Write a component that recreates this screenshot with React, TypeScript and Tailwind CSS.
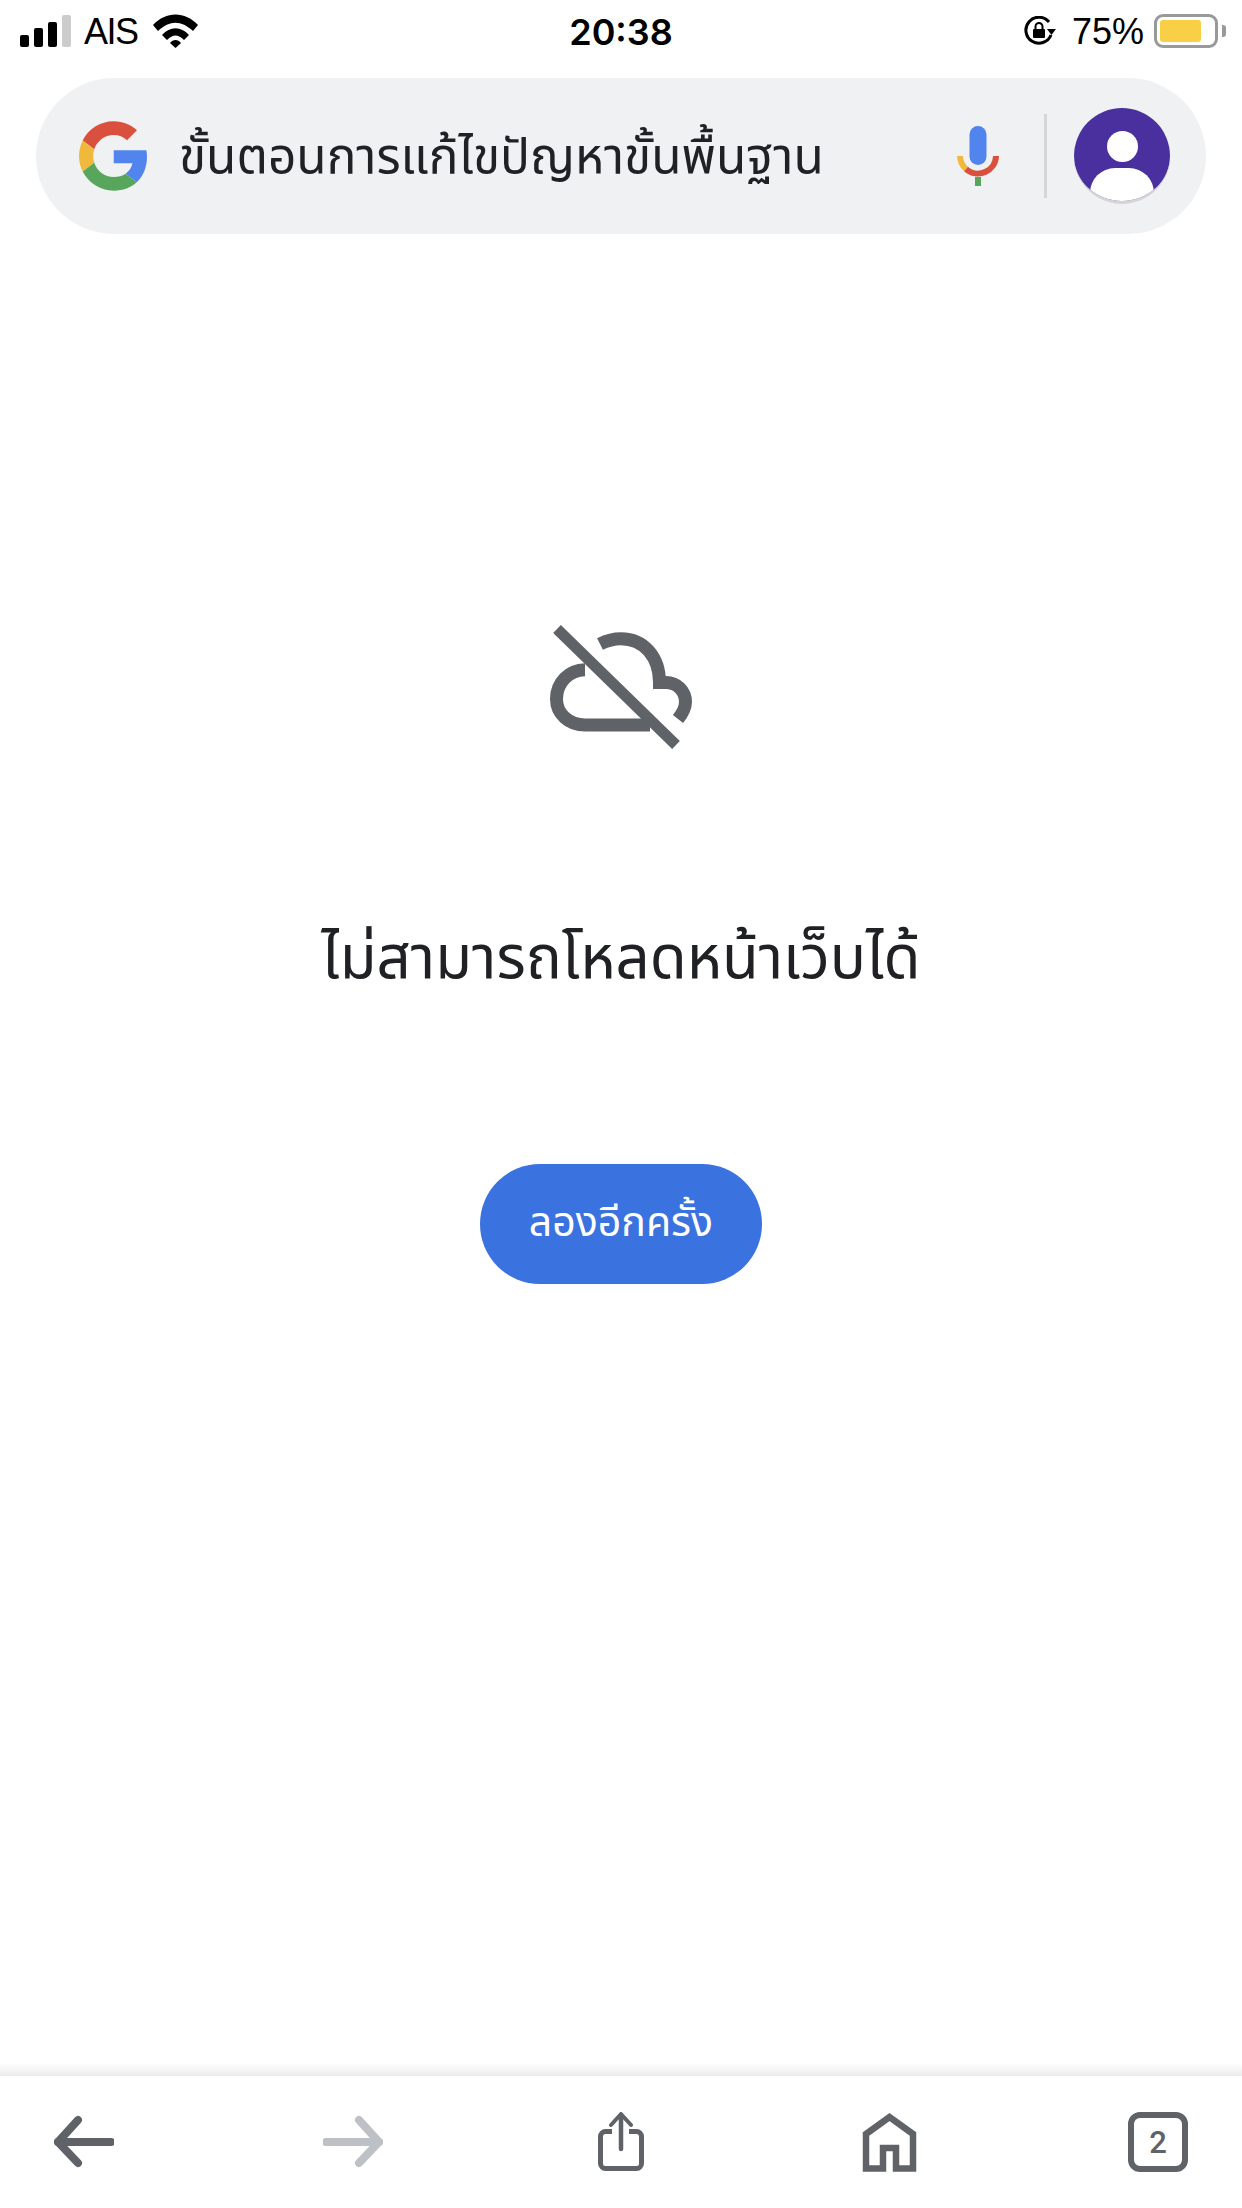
export default function App() {
  const thai = "font-['Noto_Sans_Thai','Noto_Sans','Liberation_Sans',sans-serif]";
  return (
    <div className="flex h-[2208px] w-[1242px] flex-col overflow-hidden bg-white font-['Liberation_Sans',sans-serif]">
      {/* status bar */}
      <div className="relative flex h-[62px] items-center justify-between pl-[20px] pr-[16px] text-black">
        <div className="flex items-center">
          <div className="flex h-[32px] items-end gap-[5px]">
            <div className="h-[12px] w-[9px] rounded-[2px] bg-black" />
            <div className="h-[19px] w-[9px] rounded-[2px] bg-black" />
            <div className="h-[25px] w-[9px] rounded-[2px] bg-black" />
            <div className="h-[32px] w-[9px] rounded-[2px] bg-[#cccccc]" />
          </div>
          <span className="ml-[13px] mt-[2px] text-[36px] leading-none tracking-[-1.5px]">AIS</span>
          <svg className="ml-[15px]" width="45" height="34" viewBox="0 0 45 34">
            <path d="M0 11 C13 -3 32 -3 45 11 L40 17 C28 6 17 6 5 17 Z" fill="#000" />
            <path d="M9 21 C17 12 28 12 36 21 L31 26 C25 20 20 20 14 26 Z" fill="#000" />
            <path d="M17 29 C20 25 25 25 28 29 L22.5 34 Z" fill="#000" />
          </svg>
        </div>
        <span className="absolute left-1/2 top-[12px] -translate-x-1/2 font-['Inter',sans-serif] text-[36px] font-semibold leading-[40px]">20:38</span>
        <div className="flex items-center">
          <svg width="32" height="30" viewBox="0 0 32 30">
            <path d="M27 19 A13 13 0 1 1 25 6" fill="none" stroke="#000" strokeWidth="3" />
            <path d="M23 13 L32 13 L27.5 19 Z" fill="#000" />
            <rect x="9" y="13" width="12" height="9" rx="1" fill="#000" />
            <path d="M11.5 13 V10.5 a3.5 3.5 0 0 1 7 0 V13" fill="none" stroke="#000" strokeWidth="2" />
          </svg>
          <span className="ml-[16px] mt-[2px] text-[36px] leading-none">75%</span>
          <div className="ml-[10px] flex h-[34px] w-[64px] items-center rounded-[9px] border-[3px] border-[#999999] pl-[3px]">
            <div className="h-[22px] w-[41px] rounded-[3px] bg-[#f8cf45]" />
          </div>
          <div className="ml-[4px] h-[12px] w-[4px] rounded-r-[3px] bg-[#999999]" />
        </div>
      </div>

      {/* search pill */}
      <div className="mx-[36px] mt-[16px] flex h-[156px] items-center rounded-full bg-[#f0f1f3] pl-[43px] pr-[36px]">
        <svg width="68" height="70" viewBox="0 0 47 48" className="shrink-0">
          <path fill="#d9503f" d="M24 9.5c3.54 0 6.71 1.22 9.21 3.6l6.85-6.85C35.9 2.38 30.47 0 24 0 14.62 0 6.51 5.38 2.56 13.22l7.98 6.19C12.43 13.72 17.74 9.5 24 9.5z" />
          <path fill="#5284ee" d="M46.98 24.55c0-1.57-.15-3.09-.38-4.55H24v9.02h12.94c-.58 2.96-2.26 5.48-4.78 7.18l7.73 6c4.51-4.18 7.09-10.36 7.09-17.65z" />
          <path fill="#f1b93b" d="M10.53 28.59c-.48-1.45-.76-2.99-.76-4.59s.27-3.14.76-4.59l-7.98-6.19C.92 16.46 0 20.12 0 24c0 3.88.92 7.54 2.56 10.78l7.97-6.19z" />
          <path fill="#58a65c" d="M24 48c6.48 0 11.93-2.13 15.89-5.81l-7.73-6c-2.15 1.45-4.92 2.3-8.16 2.3-6.26 0-11.57-4.22-13.47-9.91l-7.98 6.19C6.51 42.62 14.62 48 24 48z" />
        </svg>
        <span className={`ml-[32px] mt-[6px] flex-1 whitespace-nowrap text-[49.5px] leading-none text-[#202124] ${thai}`}>ขั้นตอนการแก้ไขปัญหาขั้นพื้นฐาน</span>
        <svg width="42" height="60" viewBox="0 0 42 60" className="shrink-0">
          <rect x="12.5" y="0" width="17" height="39" rx="8.5" fill="#5284ee" />
          <path d="M3 30 A18 18 0 0 0 9 43" fill="none" stroke="#f1b93b" strokeWidth="6" />
          <path d="M9 43 A18 18 0 0 0 39 30" fill="none" stroke="#d9503f" strokeWidth="6" />
          <rect x="18" y="51" width="6" height="9" fill="#58a65c" />
        </svg>
        <div className="ml-[45px] h-[84px] w-[3px] shrink-0 bg-[#d5d6d8]" />
        <div className="relative ml-[27px] h-[96px] w-[96px] shrink-0 overflow-hidden rounded-full border-b-[3px] border-[#d5d5d5] bg-[#4a2f9e]">
          <div className="absolute left-[33px] top-[23px] h-[31px] w-[31px] rounded-full bg-white" />
          <div className="absolute left-[16px] top-[60px] h-[50px] w-[64px] rounded-[32px] bg-white" />
        </div>
      </div>

      {/* main */}
      <div className="flex flex-1 flex-col items-center pt-[389px]">
        <svg width="150" height="132" viewBox="0 0 150 132" className="-translate-x-[1px]">
          <g transform="translate(-45 -24)">
            <path d="M100 45 C108 41 114 39.7 121 39.7 C144 39.7 159.5 58 159.5 83.5 L166 83.5 C177 83.5 185.5 92 185.5 103 C185.5 110 182 115 178 120" fill="none" stroke="#5f6368" strokeWidth="13" />
            <path d="M85 70.7 C69 70.7 56.5 84 56.5 100 C56.5 115 69 126 85 126 L150 126" fill="none" stroke="#5f6368" strokeWidth="13" />
            <path d="M57 30 L176 146" fill="none" stroke="#5f6368" strokeWidth="11" />
          </g>
        </svg>
        <h1 className={`mt-[175px] text-center text-[60px] font-normal leading-[60px] text-[#202124] ${thai}`}>ไม่สามารถโหลดหน้าเว็บได้</h1>
        <button className={`mt-[174px] flex h-[120px] w-[282px] items-center justify-center rounded-full bg-[#3a72e0] text-[41px] text-white ${thai}`}>ลองอีกครั้ง</button>
      </div>

      {/* toolbar */}
      <div className="h-[13px] bg-gradient-to-b from-white to-[#ebebeb]" />
      <div className="flex h-[132px] items-start justify-between px-[54px] pt-[36px]">
        <svg width="60" height="60" viewBox="0 0 60 60">
          <path d="M24 8 L4 30 L24 51" fill="none" stroke="#5f6368" strokeWidth="8" strokeLinecap="round" strokeLinejoin="round" />
          <path d="M4 30 H57" fill="none" stroke="#5f6368" strokeWidth="8" strokeLinecap="round" />
        </svg>
        <svg width="60" height="60" viewBox="0 0 60 60">
          <path d="M36 8 L56 30 L36 51" fill="none" stroke="#bdc1c6" strokeWidth="8" strokeLinecap="round" strokeLinejoin="round" />
          <path d="M3 30 H56" fill="none" stroke="#bdc1c6" strokeWidth="8" strokeLinecap="round" />
        </svg>
        <svg width="60" height="60" viewBox="0 0 60 60">
          <path d="M21 19.5 H14.5 a5 5 0 0 0 -5 5 V51.5 a5 5 0 0 0 5 5 H45.5 a5 5 0 0 0 5 -5 V24.5 a5 5 0 0 0 -5 -5 H38" fill="none" stroke="#5f6368" strokeWidth="5" />
          <path d="M30 3 V37" fill="none" stroke="#5f6368" strokeWidth="4.5" strokeLinecap="round" />
          <path d="M20 13 L30 2 L40 13" fill="none" stroke="#5f6368" strokeWidth="4" strokeLinecap="round" strokeLinejoin="round" />
        </svg>
        <svg width="60" height="60" viewBox="0 0 60 60">
          <path d="M6 56.5 V22 L29.5 5 L53 22 V56.5 H36 V36 H23 V56.5 Z" fill="none" stroke="#5f6368" strokeWidth="6.5" />
        </svg>
        <div className="flex h-[60px] w-[60px] items-center justify-center rounded-[12px] border-[6px] border-[#5f6368] font-['Roboto',sans-serif] text-[31px] font-medium leading-none text-[#5f6368]">2</div>
      </div>
    </div>
  );
}
